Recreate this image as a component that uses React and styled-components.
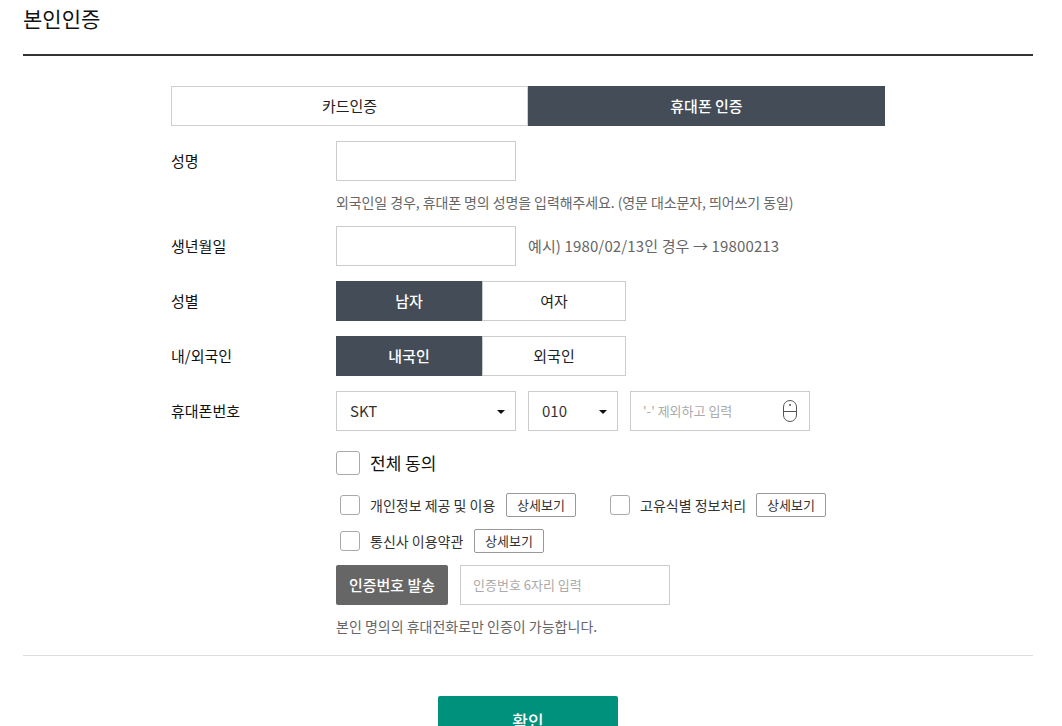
import styled, { createGlobalStyle } from "styled-components";

const GlobalStyle = createGlobalStyle`
  html, body {
    margin: 0;
    padding: 0;
    height: 726px;
    overflow: hidden;
    background: #fff;
  }
  * { box-sizing: border-box; }
  body {
    font-family: "Noto Sans CJK KR", "Noto Sans", sans-serif;
    font-size: 15px;
    color: #222;
  }
`;

const Page = styled.div`
  width: 1010px;
  margin-left: 23px;
`;

const Title = styled.h2`
  margin: 0;
  height: 56px;
  padding-top: 3px;
  border-bottom: 2px solid #333;
  font-size: 21px;
  font-weight: 400;
  line-height: 30px;
  color: #111;
`;

const Form = styled.div`
  width: 714px;
  margin: 30px 0 0 148px;
`;

const Tabs = styled.div`
  display: flex;
  height: 40px;
  margin-bottom: 15px;
`;

const Tab = styled.div`
  width: 357px;
  display: flex;
  align-items: center;
  justify-content: center;
  padding-bottom: 1px;
  border: ${({ $active }) => ($active ? "none" : "1px solid #d0d0d0")};
  background: ${({ $active }) => ($active ? "#434c57" : "#fff")};
  color: ${({ $active }) => ($active ? "#fff" : "#222")};
  font-weight: ${({ $active }) => ($active ? 500 : 400)};
`;

const Row = styled.div`
  display: flex;
  align-items: center;
  height: 40px;
  margin-bottom: 15px;
`;

const Label = styled.div`
  width: 165px;
  flex: none;
  color: #111;
  margin-top: -2px;
`;

const Field = styled.div`
  display: flex;
  align-items: center;
  gap: 12px;
`;

const TextBox = styled.div`
  position: relative;
  display: flex;
  align-items: center;
  width: ${({ $w }) => $w}px;
  height: 40px;
  padding: 0 0 1px 12px;
  border: 1px solid #ccc;
  background: #fff;
  color: #aaa;
  font-size: 13px;
`;

const Note = styled.div`
  color: #666;
  font-size: 14px;
`;

const Example = styled.div`
  color: #666;
  font-size: 15px;
  letter-spacing: 0.13px;
  padding-bottom: 2px;
`;

const Hint = styled(Note)`
  height: 20px;
  line-height: 20px;
  margin: -4px 0 14px 165px;
  letter-spacing: -0.09px;
`;

const Segment = styled.div`
  display: flex;
  width: 290px;
  height: 40px;
`;

const SegmentItem = styled.div`
  width: ${({ $on }) => ($on ? 146 : 144)}px;
  display: flex;
  align-items: center;
  justify-content: center;
  padding-bottom: 1px;
  border: ${({ $on }) => ($on ? "none" : "1px solid #ccc")};
  background: ${({ $on }) => ($on ? "#434c57" : "#fff")};
  color: ${({ $on }) => ($on ? "#fff" : "#222")};
  font-weight: ${({ $on }) => ($on ? 500 : 400)};
`;

const Select = styled.div`
  position: relative;
  display: flex;
  align-items: center;
  width: ${({ $w }) => $w}px;
  height: 40px;
  padding: 0 0 2px 13px;
  border: 1px solid #ccc;
  font-size: 15px;
  color: #333;

  &::after {
    content: "";
    position: absolute;
    right: 10px;
    top: 18px;
    border-left: 4px solid transparent;
    border-right: 4px solid transparent;
    border-top: 4px solid #111;
  }
`;

const MouseIcon = styled.svg`
  position: absolute;
  right: 12px;
  top: 8px;
`;

const AllAgree = styled.div`
  display: flex;
  align-items: center;
  gap: 10px;
  height: 24px;
  margin: 20px 0 18px 165px;
  font-size: 17px;
  color: #111;
`;

const AllAgreeText = styled.span`
  margin-top: -2px;
`;

const Check = styled.span`
  flex: none;
  display: block;
  width: ${({ $size }) => $size}px;
  height: ${({ $size }) => $size}px;
  border: 1px solid #aaa;
  border-radius: 3px;
  background: #fff;
`;

const AgreeRow = styled.div`
  display: flex;
  align-items: center;
  gap: 34px;
  height: 24px;
  margin: 0 0 12px 169px;
`;

const AgreeItem = styled.div`
  display: flex;
  align-items: center;
  width: ${({ $w }) => $w}px;
`;

const AgreeText = styled.span`
  margin: -1px 0 0 10px;
  font-size: 14px;
  color: #333;
  white-space: nowrap;
`;

const DetailButton = styled.button`
  width: 70px;
  height: 24px;
  margin-left: auto;
  padding: 0 0 1px;
  border: 1px solid #999;
  border-radius: 2px;
  background: #fff;
  font-family: inherit;
  font-size: 13px;
  color: #333;
`;

const SendRow = styled.div`
  display: flex;
  gap: 12px;
  height: 40px;
  margin-left: 165px;
`;

const SendButton = styled.button`
  width: 112px;
  height: 40px;
  padding: 0 0 2px;
  border: none;
  border-radius: 2px;
  background: #666;
  font-family: inherit;
  font-size: 15px;
  font-weight: 500;
  color: #fff;
`;

const FootNote = styled(Note)`
  height: 20px;
  line-height: 20px;
  margin: 11px 0 0 165px;
`;

const Divider = styled.div`
  height: 1px;
  margin-top: 19px;
  background: #ddd;
`;

const Actions = styled.div`
  display: flex;
  justify-content: center;
  margin-top: 40px;
`;

const ConfirmButton = styled.button`
  width: 180px;
  height: 50px;
  padding: 0 0 2px;
  border: none;
  border-radius: 2px;
  background: #00917c;
  font-family: inherit;
  font-size: 17px;
  font-weight: 500;
  color: #fff;
`;

export default function App() {
  return (
    <>
      <GlobalStyle />
      <Page>
        <Title>본인인증</Title>
        <Form>
          <Tabs>
            <Tab>카드인증</Tab>
            <Tab $active>휴대폰 인증</Tab>
          </Tabs>
          <Row>
            <Label>성명</Label>
            <TextBox $w={180} />
          </Row>
          <Hint>외국인일 경우, 휴대폰 명의 성명을 입력해주세요. (영문 대소문자, 띄어쓰기 동일)</Hint>
          <Row>
            <Label>생년월일</Label>
            <Field>
              <TextBox $w={180} />
              <Example>예시) 1980/02/13인 경우 → 19800213</Example>
            </Field>
          </Row>
          <Row>
            <Label>성별</Label>
            <Segment>
              <SegmentItem $on>남자</SegmentItem>
              <SegmentItem>여자</SegmentItem>
            </Segment>
          </Row>
          <Row>
            <Label>내/외국인</Label>
            <Segment>
              <SegmentItem $on>내국인</SegmentItem>
              <SegmentItem>외국인</SegmentItem>
            </Segment>
          </Row>
          <Row>
            <Label>휴대폰번호</Label>
            <Field>
              <Select $w={180}>SKT</Select>
              <Select $w={90}>010</Select>
              <TextBox $w={180}>
                '-' 제외하고 입력
                <MouseIcon width="14" height="22" viewBox="0 0 14 22" fill="none">
                  <rect x="0.5" y="0.5" width="13" height="21" rx="6.5" stroke="#555" />
                  <path d="M0.5 11.5H13.5" stroke="#555" />
                  <circle cx="7" cy="5" r="1" fill="#555" />
                </MouseIcon>
              </TextBox>
            </Field>
          </Row>
          <AllAgree>
            <Check $size={24} />
            <AllAgreeText>전체 동의</AllAgreeText>
          </AllAgree>
          <AgreeRow>
            <AgreeItem $w={236}>
              <Check $size={20} />
              <AgreeText>개인정보 제공 및 이용</AgreeText>
              <DetailButton>상세보기</DetailButton>
            </AgreeItem>
            <AgreeItem $w={216}>
              <Check $size={20} />
              <AgreeText>고유식별 정보처리</AgreeText>
              <DetailButton>상세보기</DetailButton>
            </AgreeItem>
          </AgreeRow>
          <AgreeRow>
            <AgreeItem $w={204}>
              <Check $size={20} />
              <AgreeText>통신사 이용약관</AgreeText>
              <DetailButton>상세보기</DetailButton>
            </AgreeItem>
          </AgreeRow>
          <SendRow>
            <SendButton>인증번호 발송</SendButton>
            <TextBox $w={210}>인증번호 6자리 입력</TextBox>
          </SendRow>
          <FootNote>본인 명의의 휴대전화로만 인증이 가능합니다.</FootNote>
        </Form>
        <Divider />
        <Actions>
          <ConfirmButton>확인</ConfirmButton>
        </Actions>
      </Page>
    </>
  );
}
